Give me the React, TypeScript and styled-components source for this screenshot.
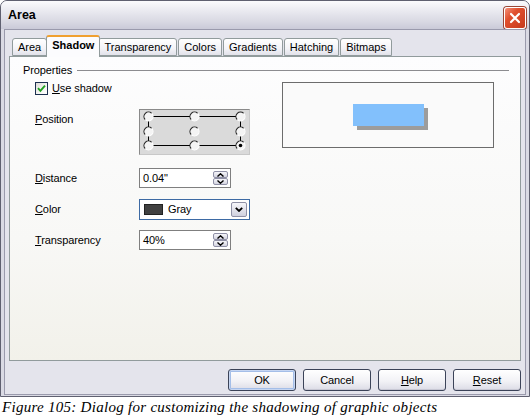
import React from 'react';
import styled, { createGlobalStyle } from 'styled-components';

const GlobalStyle = createGlobalStyle`
  html, body {
    margin: 0;
    padding: 0;
    background: #ffffff;
  }
  body {
    font-family: "Liberation Sans", Arial, sans-serif;
    font-size: 11px;
    letter-spacing: -0.1px;
    color: #000000;
  }
`;

const Page = styled.div`
  width: 530px;
  height: 420px;
  overflow: hidden;
`;

const Window = styled.div`
  width: 530px;
  height: 397px;
  box-sizing: border-box;
  border: 1px solid #5f6070;
  border-radius: 7px 7px 0 0;
  background: #dadae4;
  display: flex;
  flex-direction: column;
`;

const TitleBar = styled.div`
  height: 28px;
  flex: none;
  display: flex;
  align-items: center;
  justify-content: space-between;
  padding: 0 3px 0 7px;
  border-radius: 6px 6px 0 0;
  background: linear-gradient(to bottom, #fbfbfd 0%, #ececf2 30%, #d8d8e2 75%, #cacad8 100%);
`;

const Title = styled.span`
  font-size: 12.5px;
  font-weight: bold;
  letter-spacing: 0;
  color: #000000;
`;

const CloseButton = styled.div`
  width: 20px;
  height: 20px;
  margin-top: 5px;
  border: 1px solid #ffffff;
  border-radius: 3px;
  box-shadow: 0 0 0 1px #9a4636;
  background: linear-gradient(135deg, #f4907a 0%, #e0502e 35%, #c6391c 100%);
  display: flex;
  align-items: center;
  justify-content: center;
`;

const Body = styled.div`
  flex: 1;
  margin: 0 3px 2px;
  border: 1px solid #9a9aac;
  background: #e4e4ec;
  padding: 5px 4px 3px;
  display: flex;
  flex-direction: column;
`;

const Tabs = styled.div`
  display: flex;
  align-items: flex-end;
  height: 21px;
  padding-left: 3px;
  position: relative;
  z-index: 1;
`;

const Tab = styled.div<{ $active?: boolean }>`
  box-sizing: border-box;
  height: ${({ $active }) => ($active ? '22px' : '18px')};
  margin: ${({ $active }) => ($active ? '0 -2px -1px' : '0 1px 0 0')};
  padding: 2px 5px 0;
  border: 1px solid #919b9c;
  border-bottom: ${({ $active }) => ($active ? 'none' : '1px solid #919b9c')};
  border-top: ${({ $active }) => ($active ? '2px solid #f0a030' : '1px solid #919b9c')};
  border-radius: 3px 3px 0 0;
  background: ${({ $active }) =>
    $active ? '#fcfcfe' : 'linear-gradient(to bottom, #ffffff 0%, #f3f3f7 60%, #e2e2ea 100%)'};
  font-weight: ${({ $active }) => ($active ? 'bold' : 'normal')};
  letter-spacing: 0;
  line-height: 13px;
  white-space: nowrap;
  position: relative;
  z-index: ${({ $active }) => ($active ? 2 : 0)};
`;

const Panel = styled.div`
  box-sizing: border-box;
  height: 305px;
  border: 1px solid #919b9c;
  background: linear-gradient(to bottom, #fdfdfe 0%, #f8f8f6 60%, #f2f1ea 100%);
  padding: 7px 11px 0 13px;
`;

const GroupHeader = styled.div`
  display: flex;
  align-items: center;
  line-height: 13px;
`;

const GroupLine = styled.div`
  flex: 1;
  height: 1px;
  margin-left: 5px;
  background: #8c8c90;
`;

const GroupBody = styled.div`
  padding: 0 15px 0 12px;
`;

const TopSection = styled.div`
  display: flex;
  align-items: flex-start;
  margin-top: 5px;
`;

const LeftColumn = styled.div`
  display: flex;
  flex-direction: column;
`;

const CheckRow = styled.div`
  display: flex;
  align-items: center;
  height: 13px;
  line-height: 13px;
`;

const CheckBox = styled.div`
  box-sizing: border-box;
  width: 13px;
  height: 13px;
  border: 1px solid #1c3050;
  background: linear-gradient(135deg, #dcdcd6 0%, #f6f6f4 60%, #ffffff 100%);
  margin-right: 4px;
  display: flex;
  align-items: center;
  justify-content: center;
`;

const Row = styled.div<{ $top: number }>`
  display: flex;
  align-items: flex-start;
  margin-top: ${({ $top }) => $top}px;
`;

const Label = styled.div<{ $padTop?: number }>`
  width: 104px;
  flex: none;
  line-height: 13px;
  padding-top: ${({ $padTop }) => $padTop ?? 4}px;
`;

const PositionBox = styled.div`
  box-sizing: border-box;
  width: 111px;
  height: 46px;
  border: 1px solid #8a8a8a;
  border-right-color: #c8c8c8;
  border-bottom-color: #c8c8c8;
  background: #dadada;
`;

const PreviewBox = styled.div`
  box-sizing: border-box;
  width: 212px;
  height: 66px;
  margin-left: auto;
  border: 1px solid #6c6c6c;
  background: #fafafa;
  display: flex;
  align-items: center;
  justify-content: center;
`;

const PreviewShape = styled.div`
  width: 71px;
  height: 22px;
  background: #82c0fc;
  box-shadow: 4px 4px 0 #9c9c9c;
`;

const Field = styled.div<{ $width: number; $focused?: boolean }>`
  box-sizing: border-box;
  width: ${({ $width }) => $width}px;
  height: ${({ $focused }) => ($focused ? 21 : 20)}px;
  border: 1px solid ${({ $focused }) => ($focused ? '#3d6aa4' : '#7f7f7f')};
  background: #ffffff;
  display: flex;
  align-items: center;
  padding: 0 2px 0 3px;
  line-height: 13px;
`;

const FieldText = styled.span`
  flex: 1;
`;

const Spinner = styled.div`
  display: flex;
  flex-direction: column;
`;

const SpinButton = styled.div`
  box-sizing: border-box;
  width: 15px;
  height: 7px;
  border: 1px solid #8f90a6;
  border-radius: 2px;
  background: linear-gradient(to bottom, #f6f6fa 0%, #d4d4e0 100%);
  display: flex;
  align-items: center;
  justify-content: center;
`;

const Swatch = styled.div`
  width: 17px;
  height: 9px;
  border: 1px solid #222222;
  background: #404040;
  margin: 0 5px 0 1px;
`;

const DropButton = styled.div`
  box-sizing: border-box;
  width: 16px;
  height: 15px;
  border: 1px solid #8f90a6;
  border-radius: 2px;
  background: linear-gradient(to bottom, #f6f6fa 0%, #d0d0de 100%);
  display: flex;
  align-items: center;
  justify-content: center;
`;

const ButtonRow = styled.div`
  display: flex;
  justify-content: flex-end;
  gap: 7px;
  margin-top: 8px;
`;

const Button = styled.div<{ $default?: boolean }>`
  box-sizing: border-box;
  width: 68px;
  height: 22px;
  border: 1px solid #3b4358;
  border-radius: 3px;
  background: linear-gradient(to bottom, #ffffff 0%, #f2f2f6 55%, #dcdce6 100%);
  box-shadow: ${({ $default }) =>
    $default ? 'inset 0 0 0 1px #c6d6f2, inset 0 0 0 2px #a4bee8' : 'inset 0 -1px 0 #c8c8d4'};
  display: flex;
  align-items: center;
  justify-content: center;
  line-height: 13px;
`;

const Caption = styled.div`
  font-family: "Liberation Serif", "Times New Roman", serif;
  font-style: italic;
  font-size: 15px;
  letter-spacing: 0.28px;
  line-height: 18px;
  padding: 1px 0 0 2px;
`;

const Radio = ({ cx, cy, checked }: { cx: number; cy: number; checked?: boolean }) => (
  <g>
    <circle cx={cx} cy={cy} r={4.5} fill="#f4f4f4" />
    <path
      d={`M ${cx + 3.2} ${cy - 3.2} A 4.5 4.5 0 0 0 ${cx - 3.2} ${cy + 3.2}`}
      stroke="#202020"
      fill="none"
      strokeWidth={1.1}
    />
    <path
      d={`M ${cx - 3.2} ${cy + 3.2} A 4.5 4.5 0 0 0 ${cx + 3.2} ${cy - 3.2}`}
      stroke="#ffffff"
      fill="none"
      strokeWidth={1.1}
    />
    {checked && <circle cx={cx} cy={cy} r={1.8} fill="#000000" />}
  </g>
);

const PositionGrid = () => {
  const xs = [8.5, 54.5, 100.5];
  const ys = [6.5, 21.5, 35.5];
  return (
    <svg width="109" height="44" viewBox="0 0 109 44">
      <g stroke="#000000" strokeWidth={1}>
        <line x1={13} y1={6.5} x2={50} y2={6.5} />
        <line x1={59} y1={6.5} x2={96} y2={6.5} />
        <line x1={13} y1={35.5} x2={50} y2={35.5} />
        <line x1={59} y1={35.5} x2={96} y2={35.5} />
        <line x1={8.5} y1={11} x2={8.5} y2={17} />
        <line x1={8.5} y1={26} x2={8.5} y2={31} />
        <line x1={100.5} y1={11} x2={100.5} y2={17} />
        <line x1={100.5} y1={26} x2={100.5} y2={31} />
      </g>
      {ys.map((y, r) =>
        xs.map((x, c) => <Radio key={`${r}-${c}`} cx={x} cy={y} checked={r === 2 && c === 2} />)
      )}
    </svg>
  );
};

const Arrow = ({ up }: { up?: boolean }) => (
  <svg width="7" height="4" viewBox="0 0 7 4">
    <polyline
      points={up ? '0.5,3.5 3.5,0.8 6.5,3.5' : '0.5,0.5 3.5,3.2 6.5,0.5'}
      fill="none"
      stroke="#000000"
      strokeWidth={1.4}
    />
  </svg>
);

const SpinBox = ({ value }: { value: string }) => (
  <Field $width={92}>
    <FieldText>{value}</FieldText>
    <Spinner>
      <SpinButton>
        <Arrow up />
      </SpinButton>
      <SpinButton>
        <Arrow />
      </SpinButton>
    </Spinner>
  </Field>
);

const tabs = ['Area', 'Shadow', 'Transparency', 'Colors', 'Gradients', 'Hatching', 'Bitmaps'];

export default function App() {
  return (
    <Page>
      <GlobalStyle />
      <Window>
        <TitleBar>
          <Title>Area</Title>
          <CloseButton>
            <svg width="12" height="12" viewBox="0 0 12 12">
              <path d="M2 2 L10 10 M10 2 L2 10" stroke="#ffffff" strokeWidth={2.2} strokeLinecap="round" />
            </svg>
          </CloseButton>
        </TitleBar>
        <Body>
          <Tabs>
            {tabs.map((t) => (
              <Tab key={t} $active={t === 'Shadow'}>
                {t}
              </Tab>
            ))}
          </Tabs>
          <Panel>
            <GroupHeader>
              <span>Properties</span>
              <GroupLine />
            </GroupHeader>
            <GroupBody>
              <TopSection>
                <LeftColumn>
                  <CheckRow>
                    <CheckBox>
                      <svg width="9" height="9" viewBox="0 0 9 9">
                        <path d="M1 4.2 L3.4 6.8 L8 1.6" stroke="#21a121" strokeWidth={1.9} fill="none" />
                      </svg>
                    </CheckBox>
                    <span>
                      <u>U</u>se shadow
                    </span>
                  </CheckRow>
                  <Row $top={14}>
                    <Label $padTop={4}>
                      <u>P</u>osition
                    </Label>
                    <PositionBox>
                      <PositionGrid />
                    </PositionBox>
                  </Row>
                </LeftColumn>
                <PreviewBox>
                  <PreviewShape />
                </PreviewBox>
              </TopSection>
              <Row $top={13}>
                <Label>
                  <u>D</u>istance
                </Label>
                <SpinBox value={'0.04"'} />
              </Row>
              <Row $top={11}>
                <Label>
                  <u>C</u>olor
                </Label>
                <Field $width={111} $focused>
                  <Swatch />
                  <FieldText>Gray</FieldText>
                  <DropButton>
                    <svg width="8" height="5" viewBox="0 0 8 5">
                      <polyline points="0.8,0.8 4,4 7.2,0.8" fill="none" stroke="#000000" strokeWidth={1.8} />
                    </svg>
                  </DropButton>
                </Field>
              </Row>
              <Row $top={10}>
                <Label>
                  <u>T</u>ransparency
                </Label>
                <SpinBox value="40%" />
              </Row>
            </GroupBody>
          </Panel>
          <ButtonRow>
            <Button $default>OK</Button>
            <Button>Cancel</Button>
            <Button>
              <span>
                <u>H</u>elp
              </span>
            </Button>
            <Button>
              <span>
                <u>R</u>eset
              </span>
            </Button>
          </ButtonRow>
        </Body>
      </Window>
      <Caption>Figure 105: Dialog for customizing the shadowing of graphic objects</Caption>
    </Page>
  );
}
